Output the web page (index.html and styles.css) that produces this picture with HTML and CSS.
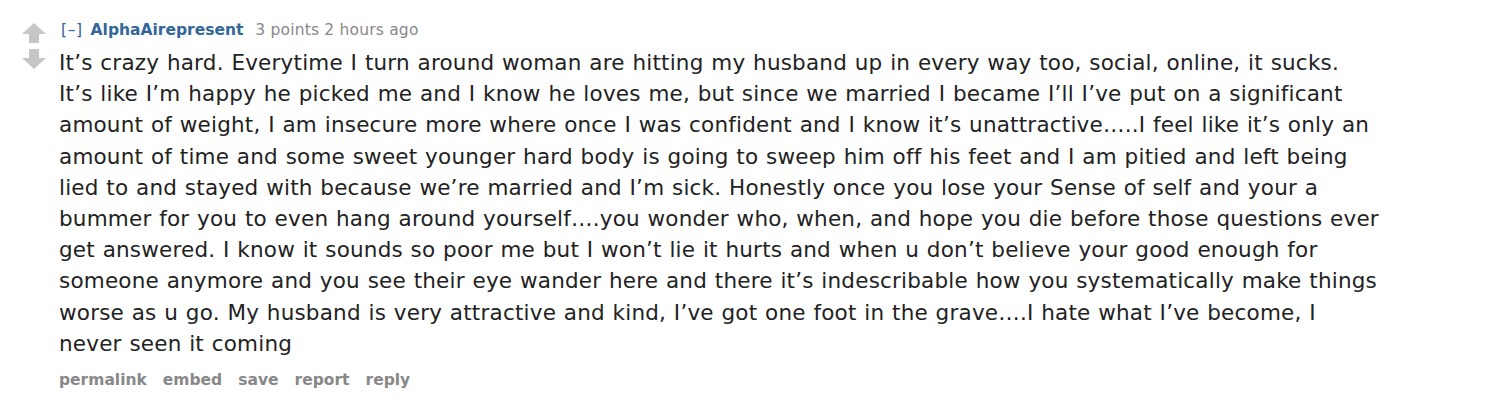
FILE: index.html
```html
<!DOCTYPE html>
<html>
<head>
<meta charset="utf-8">
<link rel="stylesheet" href="styles.css">
</head>
<body>
<div class="prev">
  <ul class="buttons">
    <li><a>permalink</a></li>
    <li><a>embed</a></li>
    <li><a>save</a></li>
    <li><a>report</a></li>
    <li><a>reply</a></li>
  </ul>
</div>
<div class="comment">
  <div class="midcol">
    <svg class="arrow" width="26" height="22" viewBox="0 0 26 22"><path d="M13 1 L25 12 L18 12 L18 21 L8 21 L8 12 L1 12 Z" fill="#c6c6c6"/></svg>
    <svg class="arrow" width="26" height="22" viewBox="0 0 26 22"><path d="M8 1 L18 1 L18 10 L25 10 L13 21 L1 10 L8 10 Z" fill="#c6c6c6"/></svg>
  </div>
  <div class="entry">
    <p class="tagline"><a class="expand">[–]</a> <a class="author">AlphaAirepresent</a> <span class="score">3 points</span> <time>2 hours ago</time></p>
    <div class="md"><p>It’s crazy hard. Everytime I turn around woman are hitting my husband up in every way too, social, online, it sucks. It’s like I’m happy he picked me and I know he loves me, but since we married I became I’ll I’ve put on a significant amount of weight, I am insecure more where once I was confident and I know it’s unattractive…..I feel like it’s only an amount of time and some sweet younger hard body is going to sweep him off his feet and I am pitied and left being lied to and stayed with because we’re married and I’m sick. Honestly once you lose your Sense of self and your a bummer for you to even hang around yourself….you wonder who, when, and hope you die before those questions ever get answered. I know it sounds so poor me but I won’t lie it hurts and when u don’t believe your good enough for someone anymore and you see their eye wander here and there it’s indescribable how you systematically make things worse as u go. My husband is very attractive and kind, I’ve got one foot in the grave….I hate what I’ve become, I never seen it coming</p></div>
    <ul class="buttons">
      <li><a>permalink</a></li>
      <li><a>embed</a></li>
      <li><a>save</a></li>
      <li><a>report</a></li>
      <li><a>reply</a></li>
    </ul>
  </div>
</div>
</body>
</html>
```
FILE: styles.css
```css
html, body {
  margin: 0;
  padding: 0;
  background: #ffffff;
}
body {
  font-family: "DejaVu Sans", Verdana, sans-serif;
  color: #222222;
  overflow: hidden;
}
.prev {
  display: flow-root;
  height: 0;
  padding-left: 59px;
}
.prev .buttons {
  padding-top: 0;
  margin-top: -21px;
}
.comment {
  display: flex;
  padding-left: 21px;
}
.midcol {
  display: flex;
  flex-direction: column;
  gap: 4px;
  width: 38px;
  padding-top: 22px;
}
.arrow {
  display: block;
}
.entry {
  width: 1320.5px;
}
.tagline {
  margin: 0;
  padding-top: 19px;
  font-size: 15.5px;
  line-height: 22px;
  color: #888888;
}
.score {
  letter-spacing: 0.2px;
}
time {
  letter-spacing: 0.2px;
}
.expand {
  color: #369;
  margin-right: 3px;
  padding-left: 2px;
  letter-spacing: 0.6px;
}
.author {
  color: #369;
  font-weight: bold;
  margin-right: 7px;
}
.md {
  margin-top: 6px;
}
.md p {
  margin: 0;
  font-size: 21.5px;
  line-height: 31.2px;
  letter-spacing: 0.2px;
  word-spacing: 0.7px;
  color: #222222;
}
.buttons {
  list-style: none;
  margin: 0;
  padding: 0;
  display: flex;
  gap: 16px;
  font-size: 15.5px;
  font-weight: bold;
  line-height: 22px;
  color: #888888;
  padding-top: 10px;
}
```
